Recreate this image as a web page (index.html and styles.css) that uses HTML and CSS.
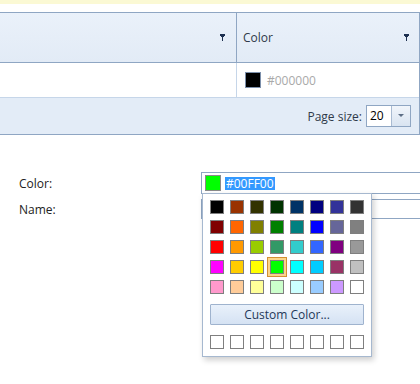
FILE: index.html
```html
<!DOCTYPE html>
<html lang="en">
<head>
    <meta charset="utf-8">
    <title>Color editor</title>
    <link rel="stylesheet" href="styles.css">
</head>
<body>
    <div class="notice"></div>

    <div class="grid">
        <div class="grid-head">
            <div class="th th-first">
                <span class="th-title"></span>
                <svg class="filter" width="5" height="8" viewBox="0 0 5 8"><path d="M0 0h5v2h-1v1h-1v4h-1v-4h-1v-1h-1z" fill="#1d3050"/></svg>
            </div>
            <div class="th">
                <span class="th-title">Color</span>
                <svg class="filter" width="5" height="8" viewBox="0 0 5 8"><path d="M0 0h5v2h-1v1h-1v4h-1v-4h-1v-1h-1z" fill="#1d3050"/></svg>
            </div>
        </div>
        <div class="grid-row">
            <div class="td td-first"></div>
            <div class="td">
                <span class="cell-swatch"></span>
                <span class="hex">#000000</span>
            </div>
        </div>
        <div class="pager">
            <span>Page size:</span>
            <span class="dropdown">
                <span class="dd-value">20</span>
                <span class="dd-arrow"></span>
            </span>
        </div>
    </div>

    <div class="editor">
        <div class="field">
            <label>Color:</label>
            <div class="colorpicker">
                <span class="picker-swatch"></span>
                <span class="picker-text">#00FF00</span>

                <div class="popup">
                    <div class="palette">
                        <span style="background:#000000"></span>
                        <span style="background:#993300"></span>
                        <span style="background:#333300"></span>
                        <span style="background:#003300"></span>
                        <span style="background:#003366"></span>
                        <span style="background:#000080"></span>
                        <span style="background:#333399"></span>
                        <span style="background:#333333"></span>

                        <span style="background:#800000"></span>
                        <span style="background:#ff6600"></span>
                        <span style="background:#808000"></span>
                        <span style="background:#008000"></span>
                        <span style="background:#008080"></span>
                        <span style="background:#0000ff"></span>
                        <span style="background:#666699"></span>
                        <span style="background:#808080"></span>

                        <span style="background:#ff0000"></span>
                        <span style="background:#ff9900"></span>
                        <span style="background:#99cc00"></span>
                        <span style="background:#339966"></span>
                        <span style="background:#33cccc"></span>
                        <span style="background:#3366ff"></span>
                        <span style="background:#800080"></span>
                        <span style="background:#999999"></span>

                        <span style="background:#ff00ff"></span>
                        <span style="background:#ffcc00"></span>
                        <span style="background:#ffff00"></span>
                        <span class="selected" style="background:#00ff00"></span>
                        <span style="background:#00ffff"></span>
                        <span style="background:#00ccff"></span>
                        <span style="background:#993366"></span>
                        <span style="background:#c0c0c0"></span>

                        <span style="background:#ff99cc"></span>
                        <span style="background:#ffcc99"></span>
                        <span style="background:#ffff99"></span>
                        <span style="background:#ccffcc"></span>
                        <span style="background:#ccffff"></span>
                        <span style="background:#99ccff"></span>
                        <span style="background:#cc99ff"></span>
                        <span style="background:#ffffff"></span>
                    </div>
                    <button class="custom-button">Custom Color...</button>
                    <div class="palette custom-row">
                        <span></span><span></span><span></span><span></span>
                        <span></span><span></span><span></span><span></span>
                    </div>
                </div>
            </div>
        </div>
        <div class="field">
            <label>Name:</label>
            <input class="text-input" type="text">
        </div>
    </div>
</body>
</html>
```

FILE: styles.css
```css
html, body {
    min-height: 100%;
}
body {
    font-family: "Open Sans", "Liberation Sans", sans-serif;
    font-size: 12px;
    color: #333;
    margin: 0;
    min-height: 384px;
    background: #fff;
}
.notice {
    height: 4px;
    background: #fbf9d4;
    margin-bottom: 8px;
}

/* grid */
.grid {
    border-top: 1px solid #8fa6c3;
    border-right: 1px solid #8fa6c3;
    border-bottom: 1px solid #8fa6c3;
}
.grid-head {
    display: flex;
    height: 50px;
    box-sizing: border-box;
    background: linear-gradient(#eaf1fa, #e2ebf6);
    border-bottom: 1px solid #8fa6c3;
}
.th {
    flex: 1;
    display: flex;
    align-items: center;
    justify-content: space-between;
    padding: 0 10px 0 6px;
    color: #2f3a4a;
}
.th-first {
    flex: none;
    width: 237px;
    box-sizing: border-box;
    border-right: 1px solid #8fa6c3;
    padding-right: 11px;
}
.filter { display: block; }
.grid-row {
    display: flex;
    height: 35px;
    box-sizing: border-box;
    border-bottom: 1px solid #c6d6e9;
}
.td {
    flex: 1;
    display: flex;
    align-items: center;
    gap: 6px;
    padding-left: 8px;
}
.td-first {
    flex: none;
    width: 237px;
    box-sizing: border-box;
    border-right: 1px solid #c6d6e9;
}
.cell-swatch {
    width: 16px;
    height: 16px;
    box-sizing: border-box;
    background: #000;
    border: 1px solid #7d90ab;
}
.hex { color: #a9a9a9; }
.pager {
    display: flex;
    justify-content: flex-end;
    align-items: center;
    gap: 4px;
    height: 36px;
    padding-right: 8px;
    background: #e3ecf7;
    color: #2f3a4a;
}
.dropdown {
    display: flex;
    width: 45px;
    height: 22px;
    box-sizing: border-box;
    border: 1px solid #8fa6c3;
    background: #fff;
}
.dd-value {
    flex: 1;
    padding-left: 3px;
    line-height: 20px;
    color: #000;
}
.dd-arrow {
    width: 18px;
    border-left: 1px solid #a9bbd2;
    background: linear-gradient(#f1f5fb, #d9e4f1);
    position: relative;
}
.dd-arrow::after {
    content: "";
    position: absolute;
    left: 6px;
    top: 8px;
    border-left: 3px solid transparent;
    border-right: 3px solid transparent;
    border-top: 3px solid #5d6e86;
}

/* editor form */
.editor {
    padding: 37px 0 0 19px;
}
.field {
    display: flex;
    align-items: center;
    margin-bottom: 5px;
}
.field label {
    flex: none;
    width: 182px;
    color: #222;
}
.colorpicker {
    flex: none;
    position: relative;
    display: flex;
    align-items: center;
    gap: 4px;
    width: 240px;
    height: 22px;
    box-sizing: border-box;
    border: 1px solid #8fa6c3;
    padding-left: 3px;
}
.picker-swatch {
    width: 16px;
    height: 16px;
    box-sizing: border-box;
    background: #00ff00;
    border: 1px solid #8a8a8a;
}
.picker-text {
    background: #3399ff;
    color: #fff;
    line-height: 13px;
    padding: 0 1px;
}
.text-input {
    flex: none;
    width: 240px;
    height: 20px;
    box-sizing: border-box;
    border: 1px solid #8fa6c3;
    margin: 0;
}

/* popup */
.popup {
    position: absolute;
    left: 0;
    top: 20px;
    width: 170px;
    box-sizing: border-box;
    padding: 6px 7px 7px;
    background: #fff;
    border: 1px solid #a6b8cf;
    box-shadow: 2px 3px 6px rgba(0,0,0,0.2);
    z-index: 2;
}
.palette {
    display: grid;
    grid-template-columns: repeat(8, 14px);
    grid-auto-rows: 14px;
    gap: 6px;
}
.palette span {
    box-sizing: border-box;
    border: 1px solid #7f7f7f;
    background: #fff;
}
.palette .selected {
    box-shadow: 0 0 0 2px #fbd488, 0 0 0 3px #d38f33;
}
.custom-button {
    display: block;
    width: 154px;
    height: 21px;
    margin: 10px 0 10px;
    padding: 0;
    font-family: inherit;
    font-size: 12px;
    color: #1f3858;
    border: 1px solid #9fb3ce;
    border-radius: 1px;
    background: linear-gradient(#e9f1fb, #d5e2f3);
}
```
